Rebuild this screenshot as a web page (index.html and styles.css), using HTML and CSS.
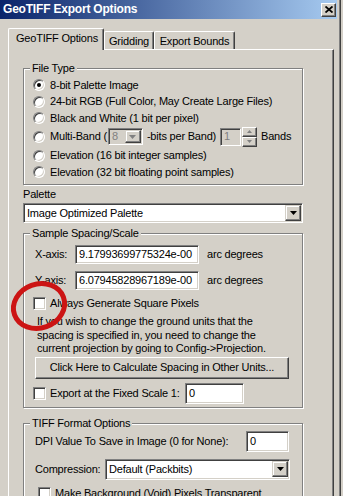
FILE: index.html
```html
<!DOCTYPE html>
<html lang="en">
<head>
    <meta charset="UTF-8">
    <meta name="viewport" content="width=device-width, initial-scale=1.0">
    <title>GeoTIFF Export Options</title>
    <link rel="stylesheet" href="styles.css">
</head>
<body>
    <div class="window">
        <!-- Title Bar -->
        <div class="title-bar">
            <span class="title">GeoTIFF Export Options</span>
            <span class="close-btn">
                <svg width="8" height="7" viewBox="0 0 8 7"><path d="M0.5 0.5L7.5 6.5M7.5 0.5L0.5 6.5" stroke="#000" stroke-width="1.8"/></svg>
            </span>
        </div>

        <div class="dialog">
            <!-- Tabs -->
            <div class="tabs">
                <div class="tab active">GeoTIFF Options</div>
                <div class="tab tab-grid">Gridding</div>
                <div class="tab tab-bounds">Export Bounds</div>
            </div>

            <div class="panel">
                <!-- File Type -->
                <fieldset class="group file-type">
                    <legend>File Type</legend>
                    <div class="row"><span class="radio checked"></span><span>8-bit Palette Image</span></div>
                    <div class="row tall"><span class="radio"></span><span>24-bit RGB (Full Color, May Create Large Files)</span></div>
                    <div class="row"><span class="radio"></span><span>Black and White (1 bit per pixel)</span></div>
                    <div class="row multi">
                        <span class="radio"></span><span>Multi-Band (</span>
                        <span class="combo bits disabled">
                            <span class="combo-text">8</span>
                            <span class="combo-btn"><svg width="7" height="4" viewBox="0 0 7 4"><path d="M0 0h7L3.5 4z" fill="#808080"/></svg></span>
                        </span>
                        <span class="bits-label">-bits per Band)</span>
                        <span class="spin">
                            <span class="spin-text">1</span>
                            <span class="spin-btns">
                                <span class="spin-btn"><svg width="5" height="3" viewBox="0 0 5 3"><path d="M2.5 0L5 3H0z" fill="#808080"/></svg></span>
                                <span class="spin-btn"><svg width="5" height="3" viewBox="0 0 5 3"><path d="M0 0h5L2.5 3z" fill="#808080"/></svg></span>
                            </span>
                        </span>
                        <span>Bands</span>
                    </div>
                    <div class="row tall"><span class="radio"></span><span>Elevation (16 bit integer samples)</span></div>
                    <div class="row"><span class="radio"></span><span>Elevation (32 bit floating point samples)</span></div>
                </fieldset>

                <!-- Palette -->
                <div class="field-label">Palette</div>
                <div class="combo palette">
                    <span class="combo-text">Image Optimized Palette</span>
                    <span class="combo-btn"><svg width="7" height="4" viewBox="0 0 7 4"><path d="M0 0h7L3.5 4z" fill="#000"/></svg></span>
                </div>

                <!-- Sample Spacing -->
                <fieldset class="group spacing">
                    <legend>Sample Spacing/Scale</legend>
                    <div class="axis-row">
                        <span class="axis-label">X-axis:</span>
                        <span class="textbox axis-input">9.17993699775324e-00</span>
                        <span class="units">arc degrees</span>
                    </div>
                    <div class="axis-row second">
                        <span class="axis-label">Y-axis:</span>
                        <span class="textbox axis-input">6.07945828967189e-00</span>
                        <span class="units">arc degrees</span>
                    </div>
                    <div class="row check-row"><span class="checkbox"></span><span>Always Generate Square Pixels</span></div>
                    <p class="note">If you wish to change the ground units that the<br>spacing is specified in, you need to change the<br>current projection by going to Config-&gt;Projection.</p>
                    <div class="button calc-btn">Click Here to Calculate Spacing in Other Units...</div>
                    <div class="row scale-row">
                        <span class="checkbox"></span>
                        <span class="scale-label">Export at the Fixed Scale 1:</span>
                        <span class="textbox scale-input">0</span>
                    </div>
                </fieldset>

                <!-- TIFF Format Options -->
                <fieldset class="group tiff">
                    <legend>TIFF Format Options</legend>
                    <div class="row dpi-row">
                        <span class="dpi-label">DPI Value To Save in Image (0 for None):</span>
                        <span class="textbox dpi-input">0</span>
                    </div>
                    <div class="row comp-row">
                        <span class="comp-label">Compression:</span>
                        <span class="combo comp">
                            <span class="combo-text">Default (Packbits)</span>
                            <span class="combo-btn"><svg width="7" height="4" viewBox="0 0 7 4"><path d="M0 0h7L3.5 4z" fill="#000"/></svg></span>
                        </span>
                    </div>
                    <div class="row bg-row"><span class="checkbox"></span><span>Make Background (Void) Pixels Transparent</span></div>
                </fieldset>
            </div>
        </div>

        <!-- red highlight drawn over the checkbox -->
        <svg class="highlight" width="80" height="70" viewBox="0 0 80 70">
            <ellipse cx="39" cy="36" rx="26" ry="22" transform="rotate(-20 39 36)" fill="none" stroke="#cc1414" stroke-width="5"/>
        </svg>
    </div>
</body>
</html>
```

FILE: styles.css
```css
* {
    box-sizing: border-box;
}

body {
    margin: 0;
    width: 343px;
    height: 496px;
    overflow: hidden;
    background-color: #d4d0c8;
    font-family: 'Liberation Sans', Arial, sans-serif;
    font-size: 11px;
    line-height: 13px;
    letter-spacing: -0.2px;
    color: #000;
}

.window {
    position: relative;
    width: 341px;
    height: 496px;
    border-right: 1px solid #404040;
    box-shadow: inset -1px 0 #808080;
}

/* Title Bar */
.title-bar {
    height: 19px;
    margin-right: 3px;
    background: linear-gradient(to right, #0a246a, #a6caf0);
    display: flex;
    align-items: center;
    justify-content: space-between;
    padding: 0 1px 0 3px;
}

.title {
    color: #fff;
    font-weight: bold;
    font-size: 12px;
}

.close-btn {
    width: 15px;
    height: 14px;
    background-color: #d4d0c8;
    border: 1px solid;
    border-color: #fff #404040 #404040 #fff;
    box-shadow: inset -1px -1px #808080;
    display: flex;
    align-items: center;
    justify-content: center;
}

/* Tabs */
.dialog {
    padding: 9px 0 0 8px;
}

.tabs {
    display: flex;
    align-items: flex-end;
    height: 22px;
}

.tab {
    height: 18px;
    margin-bottom: 1px;
    border: 1px solid;
    border-color: #fff #404040 #fff #fff;
    border-bottom: none;
    border-radius: 2px 2px 0 0;
    box-shadow: inset -1px 0 #808080;
    display: flex;
    align-items: center;
    justify-content: center;
    padding-top: 1px;
}

.tab.active {
    width: 96px;
    height: 22px;
    margin-bottom: 0;
    padding: 0 0 2px 2px;
    position: relative;
    z-index: 1;
    background-color: #d4d0c8;
}

.tab-grid {
    width: 50px;
}

.tab-bounds {
    width: 81px;
}

.panel {
    margin-top: -1px;
    width: 326px;
    height: 460px;
    border: 1px solid;
    border-color: #fff #404040 #404040 #fff;
    box-shadow: inset -1px 0 #808080;
    padding: 12px 0 0 14px;
}

/* Group boxes */
.group {
    margin: 0;
    width: 280px;
    min-width: 0;
    padding: 2px 4px 4px 9px;
    border: 1px solid #808080;
    box-shadow: inset 1px 1px #fff, 1px 1px #fff;
}

.group legend {
    padding: 0 2px;
    margin-left: -3px;
    background-color: #d4d0c8;
}

.row {
    display: flex;
    align-items: center;
    height: 16px;
    white-space: nowrap;
}

.row.tall {
    height: 17px;
}

.row.multi {
    height: 21px;
}

.radio {
    width: 12px;
    height: 12px;
    margin-right: 5px;
    border-radius: 50%;
    background-color: #fff;
    border: 1px solid;
    border-color: #808080 #fff #fff #808080;
    box-shadow: inset 1px 1px #404040, inset -1px -1px #d4d0c8;
    display: flex;
    align-items: center;
    justify-content: center;
    flex-shrink: 0;
}

.radio.checked::after {
    content: "";
    width: 4px;
    height: 4px;
    border-radius: 50%;
    background-color: #000;
}

.checkbox {
    width: 13px;
    height: 13px;
    margin-right: 4px;
    background-color: #fff;
    border: 1px solid;
    border-color: #808080 #fff #fff #808080;
    box-shadow: inset 1px 1px #404040, inset -1px -1px #d4d0c8;
    flex-shrink: 0;
}

.textbox {
    display: flex;
    align-items: center;
    padding-left: 3px;
    background-color: #fff;
    border: 1px solid;
    border-color: #808080 #fff #fff #808080;
    box-shadow: inset 1px 1px #404040, inset -1px -1px #d4d0c8;
    white-space: nowrap;
    overflow: hidden;
}

.button {
    background-color: #d4d0c8;
    border: 1px solid;
    border-color: #fff #404040 #404040 #fff;
    box-shadow: inset -1px -1px #808080;
    display: flex;
    align-items: center;
    justify-content: center;
}

/* Combo boxes */
.combo {
    display: flex;
    align-items: center;
    height: 20px;
    padding: 2px;
    background-color: #fff;
    border: 1px solid;
    border-color: #808080 #fff #fff #808080;
    box-shadow: inset 1px 1px #404040, inset -1px -1px #d4d0c8;
}

.combo-text {
    flex: 1;
    padding-left: 1px;
    white-space: nowrap;
}

.combo-btn {
    width: 16px;
    height: 16px;
    margin: -1px -1px -1px 0;
    background-color: #d4d0c8;
    border: 1px solid;
    border-color: #d4d0c8 #404040 #404040 #d4d0c8;
    box-shadow: inset -1px -1px #808080, inset 1px 1px #fff;
    display: flex;
    align-items: center;
    justify-content: center;
}

.combo.disabled {
    background-color: #d4d0c8;
    color: #808080;
}

.combo.bits {
    width: 35px;
    height: 17px;
    margin-left: 1px;
}

.combo.bits .combo-btn {
    height: 13px;
}

.bits-label {
    margin-left: 4px;
}

.spin {
    display: flex;
    align-items: center;
    margin: 0 4px 0 4px;
}

.spin-text {
    width: 21px;
    height: 18px;
    padding-left: 3px;
    color: #808080;
    border: 1px solid;
    border-color: #808080 #fff #fff #808080;
    box-shadow: inset 1px 1px #404040, inset -1px -1px #d4d0c8;
    display: flex;
    align-items: center;
}

.spin-btns {
    display: flex;
    flex-direction: column;
    margin-left: 1px;
}

.spin-btn {
    width: 15px;
    height: 10px;
    border: 1px solid;
    border-color: #fff #404040 #404040 #fff;
    box-shadow: inset -1px -1px #808080;
    display: flex;
    align-items: center;
    justify-content: center;
}

/* Palette */
.field-label {
    margin-top: 3px;
}

.combo.palette {
    width: 280px;
    margin-top: 2px;
}

/* Sample Spacing */
.spacing {
    margin-top: 4px;
    padding: 5px 4px 3px 9px;
}

.axis-row {
    display: flex;
    align-items: center;
    height: 19px;
}

.axis-row.second {
    margin-top: 7px;
}

.axis-label {
    width: 42px;
    padding-left: 2px;
}

.axis-input {
    width: 124px;
    height: 19px;
}

.units {
    margin-left: 8px;
}

.check-row {
    margin-top: 5px;
}

.note {
    margin: 4px 0 0 4px;
    line-height: 13.5px;
}

.calc-btn {
    width: 254px;
    height: 22px;
    margin: 1px 0 0 2px;
}

.scale-row {
    height: 21px;
    margin-top: 4px;
}

.scale-label {
    width: 135px;
}

.scale-input {
    width: 59px;
    height: 21px;
}

/* TIFF Format */
.tiff {
    margin-top: 9px;
    padding: 1px 4px 0 9px;
}

.dpi-row {
    height: 21px;
}

.dpi-label {
    width: 213px;
    padding-left: 2px;
}

.dpi-input {
    width: 43px;
    height: 21px;
}

.comp-row {
    height: 21px;
    margin-top: 7px;
}

.comp-label {
    width: 72px;
    padding-left: 2px;
}

.combo.comp {
    width: 185px;
    height: 21px;
}

.bg-row {
    margin-top: 6px;
    padding-left: 5px;
}

.highlight {
    position: absolute;
    left: 0;
    top: 270px;
}
```
